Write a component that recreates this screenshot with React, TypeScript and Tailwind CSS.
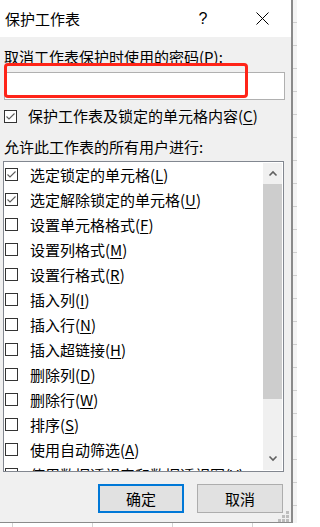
import React from 'react';

const perms = [
  { text: '选定锁定的单元格', key: 'L', checked: true },
  { text: '选定解除锁定的单元格', key: 'U', checked: true },
  { text: '设置单元格格式', key: 'F', checked: false },
  { text: '设置列格式', key: 'M', checked: false },
  { text: '设置行格式', key: 'R', checked: false },
  { text: '插入列', key: 'I', checked: false },
  { text: '插入行', key: 'N', checked: false },
  { text: '插入超链接', key: 'H', checked: false },
  { text: '删除列', key: 'D', checked: false },
  { text: '删除行', key: 'W', checked: false },
  { text: '排序', key: 'S', checked: false },
  { text: '使用自动筛选', key: 'A', checked: false },
  { text: '使用数据透视表和数据透视图', key: 'V', checked: false },
];

function CheckBox({ checked }: { checked: boolean }) {
  return (
    <svg width="13" height="13" viewBox="0 0 13 13" className="shrink-0">
      <rect x="0.5" y="0.5" width="12" height="12" fill="#fff" stroke="#333" />
      {checked && (
        <polyline points="2.5,6.5 5,9 10.5,3.5" fill="none" stroke="#5c5c5c" strokeWidth="1.1" />
      )}
    </svg>
  );
}

function Label({ text, k }: { text: string; k: string }) {
  return (
    <span className="whitespace-nowrap">
      {text}(<span className="underline underline-offset-2 decoration-1">{k}</span>)
    </span>
  );
}

function Chevron({ up }: { up?: boolean }) {
  return (
    <svg width="10" height="7" viewBox="0 0 10 7">
      <polyline
        points={up ? '1.5,5.5 5,2 8.5,5.5' : '1.5,1.5 5,5 8.5,1.5'}
        fill="none"
        stroke="#606060"
        strokeWidth="1.6"
      />
    </svg>
  );
}

export default function App() {
  return (
    <div className="w-[297px] h-[527px] overflow-hidden flex flex-col bg-white text-black font-['Noto_Sans_CJK_SC','Noto_Sans',sans-serif] text-[15px]">
      <div className="flex h-[523px]">
        {/* dialog */}
        <div className="relative w-[293px] h-[523px] flex flex-col bg-[#f0f0f0] border-r-2 border-b border-[#8a8a8a]">
          <div className="h-[37px] bg-white flex items-center shrink-0">
            <span className="pl-[5px] flex-1 leading-[20px]">保护工作表</span>
            <span className="w-[46px] mr-[13px] text-center text-[16px] leading-[20px] font-['Liberation_Sans',sans-serif]">?</span>
            <span className="w-[46px] mr-[6px] flex justify-center">
              <svg width="13" height="13" viewBox="0 0 13 13">
                <path d="M0.5 0.5 L12.5 12.5 M12.5 0.5 L0.5 12.5" stroke="#000" strokeWidth="1" />
              </svg>
            </span>
          </div>

          <div className="mt-[10px] ml-[4px] h-[20px] leading-[20px]">
            取消工作表保护时使用的密码(<span className="underline underline-offset-2 decoration-1">P</span>):
          </div>

          <div className="relative mt-[5px] ml-[4px] w-[281px] h-[28px] bg-white border border-[#b0b0b0]">
            <div className="absolute left-[-1px] top-[-10px] w-[244px] h-[35px] rounded-[4px] border-[3px] border-[#ff2418]" />
          </div>

          <div className="mt-[6px] ml-[4px] h-[20px] flex items-center gap-[11px] leading-[20px]">
            <CheckBox checked />
            <Label text="保护工作表及锁定的单元格内容" k="C" />
          </div>

          <div className="mt-[11px] ml-[4px] h-[20px] leading-[20px]">允许此工作表的所有用户进行:</div>

          <div className="mt-[4px] ml-[3px] w-[281px] h-[311px] bg-white border border-[#828790] flex overflow-hidden">
            <div className="flex-1 overflow-hidden">
              {perms.map((p, i) => (
                <div key={i} className="h-[25px] pl-[1px] flex items-center gap-[12px] leading-[20px]">
                  <CheckBox checked={p.checked} />
                  <Label text={p.text} k={p.key} />
                </div>
              ))}
            </div>
            <div className="w-[19px] my-[1px] mr-[1px] flex flex-col bg-[#f0f0f0] shrink-0">
              <div className="h-[21px] flex items-center justify-center">
                <Chevron up />
              </div>
              <div className="h-[215px] bg-[#cdcdcd]" />
              <div className="flex-1 flex items-end justify-center pb-[8px]">
                <Chevron />
              </div>
            </div>
          </div>

          <div className="mt-[12px] ml-[98px] flex gap-[13px]">
            <button className="w-[86px] h-[29px] bg-[#e1e1e1] border-2 border-[#0078d7] leading-[20px]">确定</button>
            <button className="w-[86px] h-[29px] bg-[#e1e1e1] border border-[#adadad] leading-[20px]">取消</button>
          </div>

          <svg width="11" height="11" viewBox="0 0 11 11" className="absolute right-[2px] bottom-0">
            <rect x="8" y="0" width="3" height="3" fill="#bdbdbd" />
            <rect x="4" y="4" width="3" height="3" fill="#bdbdbd" />
            <rect x="8" y="4" width="3" height="3" fill="#bdbdbd" />
            <rect x="0" y="8" width="3" height="3" fill="#bdbdbd" />
            <rect x="4" y="8" width="3" height="3" fill="#bdbdbd" />
            <rect x="8" y="8" width="3" height="3" fill="#bdbdbd" />
          </svg>
        </div>

        {/* sheet strip on the right */}
        <div className="flex-1 bg-[#f4f4f4] bg-[repeating-linear-gradient(180deg,transparent_0_22px,#cfcfcf_22px_23px)]" />
      </div>
      <div className="flex-1 bg-white bg-[repeating-linear-gradient(90deg,transparent_0_12px,#d4d4d4_12px_13px,transparent_13px_80px)]" />
    </div>
  );
}
